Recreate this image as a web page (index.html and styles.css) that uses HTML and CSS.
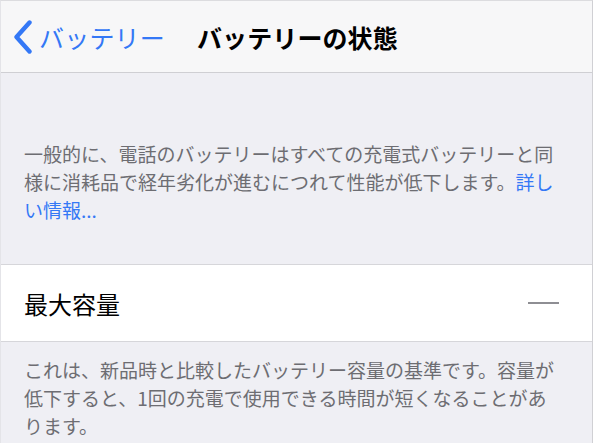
FILE: index.html
```html
<!DOCTYPE html>
<html lang="ja">
<head>
<meta charset="utf-8">
<link rel="stylesheet" href="styles.css">
</head>
<body>
<div class="screen">
  <header class="nav">
    <div class="back">
      <svg class="chev" width="22" height="34" viewBox="0 0 22 34"><path d="M17.5 2.5 L4.5 17 L17.5 31.5" fill="none" stroke="#3478f6" stroke-width="4.4" stroke-linecap="round" stroke-linejoin="round"/></svg>
      <span class="back-label">バッテリー</span>
    </div>
    <h1 class="title">バッテリーの状態</h1>
  </header>
  <section class="intro">
    <p class="note">一般的に、電話のバッテリーはすべての充電式バッテリーと同様に消耗品で経年劣化が進むにつれて性能が低下します。<span class="link">詳しい情報...</span></p>
  </section>
  <div class="row">
    <span class="row-label">最大容量</span>
    <span class="dash"></span>
  </div>
  <section class="footer">
    <p class="note">これは、新品時と比較したバッテリー容量の基準です。容量が低下すると、1回の充電で使用できる時間が短くなることがあります。</p>
  </section>
</div>
</body>
</html>
```
FILE: styles.css
```css
html, body {
  margin: 0;
  padding: 0;
  background: #efeff4;
}
body {
  font-family: "Noto Sans CJK JP", "Noto Sans", sans-serif;
}
.screen {
  width: 591px;
  height: 442px;
  border-top: 1px solid #dcdcdf;
  border-right: 1px solid #d0d0d4;
  border-left: 1px solid #e4e4e8;
  overflow: hidden;
  background: #efeff4;
}
.nav {
  height: 72px;
  box-sizing: border-box;
  background: #f7f7f8;
  border-bottom: 1px solid #cfcfd3;
  display: flex;
  align-items: center;
  padding-left: 11px;
}
.back {
  display: flex;
  align-items: center;
  gap: 5px;
}
.chev {
  display: block;
}
.back-label {
  color: #3478f6;
  font-size: 25px;
  letter-spacing: 0.2px;
}
.title {
  margin: 0 0 0 32px;
  font-size: 25px;
  font-weight: 700;
  color: #000;
  letter-spacing: 0.1px;
}
.intro {
  padding: 67px 0 40px 23px;
}
.note {
  margin: 0;
  width: 540px;
  font-size: 19px;
  line-height: 28px;
  color: #6d6d72;
}
.link {
  color: #3478f6;
}
.row {
  height: 76px;
  background: #fff;
  border-top: 1px solid #d6d6da;
  border-bottom: 1px solid #d6d6da;
  display: flex;
  align-items: center;
  justify-content: space-between;
  padding: 0 33px 0 23px;
}
.row-label {
  font-size: 24px;
  color: #000;
}
.dash {
  width: 31px;
  height: 2px;
  background: #8e8e93;
}
.footer {
  padding: 14px 0 0 23px;
}
```
